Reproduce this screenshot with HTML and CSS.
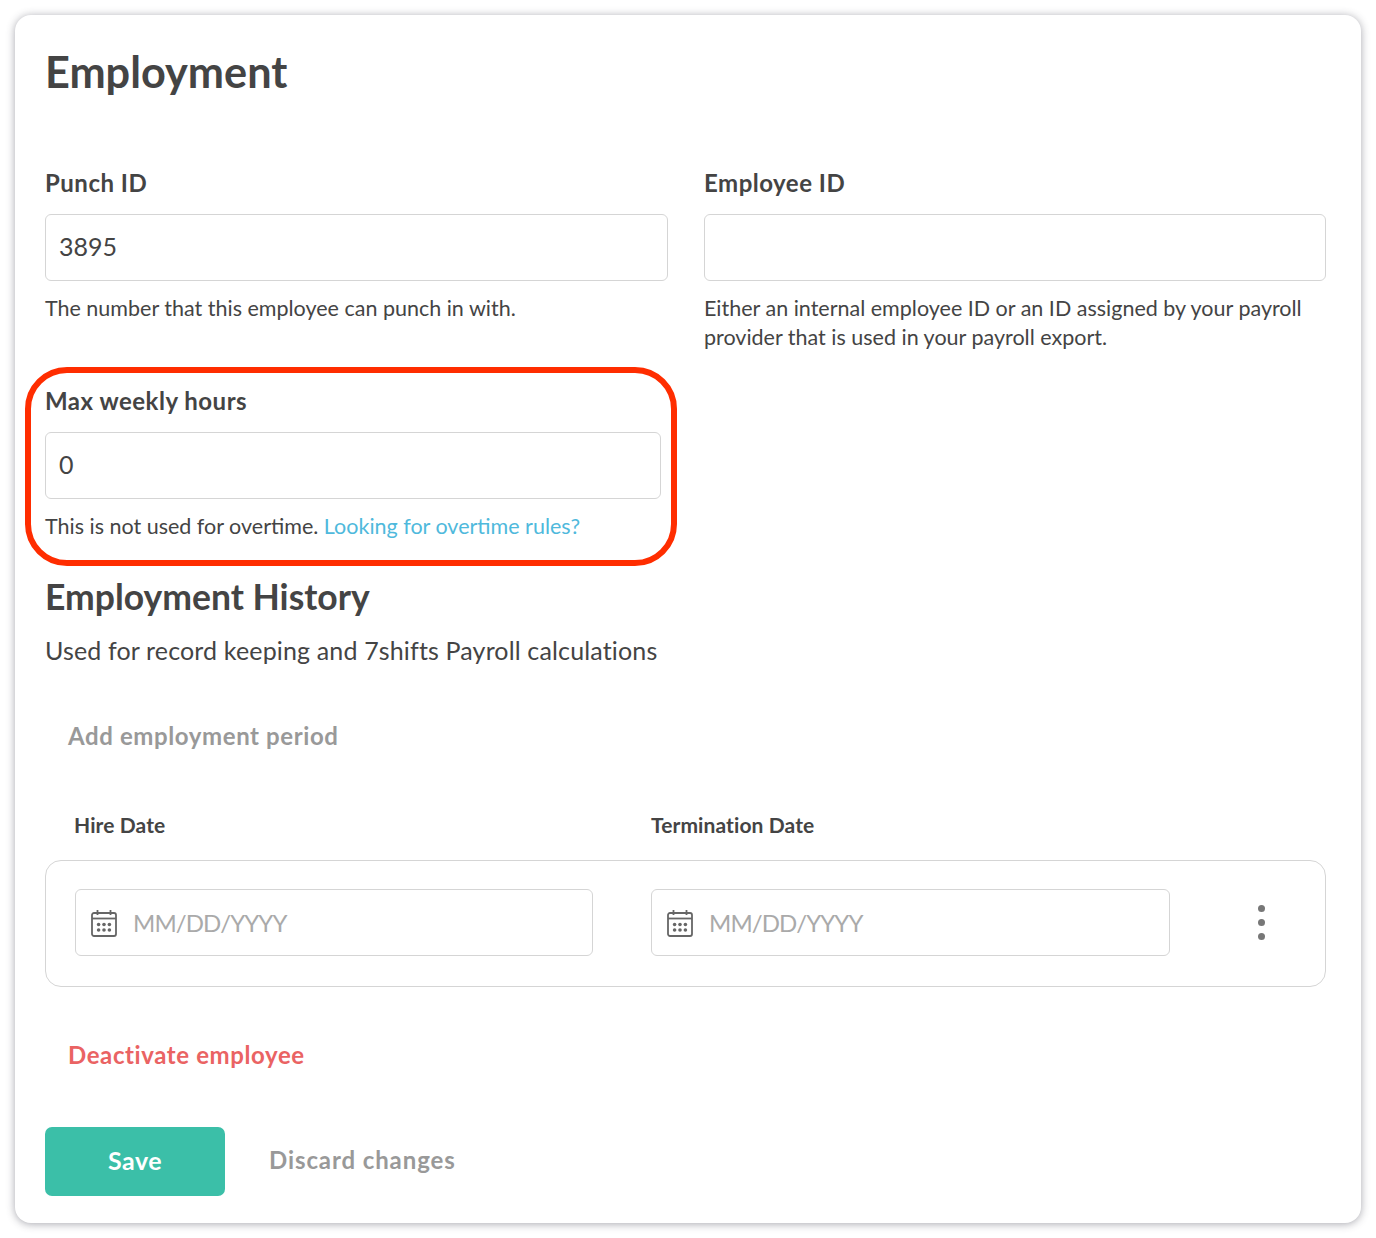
FILE: index.html
```html
<!DOCTYPE html>
<html>
  <head>
    <title>Employment</title>
    <link rel="stylesheet" href="styles.css">
  </head>
  <body>
    <div class="card">
      <h1>Employment</h1>

      <div class="fields">
        <div class="field">
          <label>Punch ID</label>
          <input class="text-input" type="text" value="3895">
          <p class="help">The number that this employee can punch in with.</p>
        </div>
        <div class="field">
          <label>Employee ID</label>
          <input class="text-input" type="text">
          <p class="help">Either an internal employee ID or an ID assigned by your payroll provider that is used in your payroll export.</p>
        </div>
        <div class="field field-narrow">
          <label>Max weekly hours</label>
          <input class="text-input" type="text" value="0">
          <p class="help">This is not used for overtime. <a href="#">Looking for overtime rules?</a></p>
        </div>
      </div>

      <h2>Employment History</h2>
      <p class="subtitle">Used for record keeping and 7shifts Payroll calculations</p>

      <a class="link-muted add-period" href="#">Add employment period</a>

      <div class="period-labels">
        <span>Hire Date</span>
        <span>Termination Date</span>
      </div>

      <div class="period">
        <div class="date-input">
          <svg class="calendar" viewBox="0 0 26 28" width="26" height="28">
            <path d="M6.5 1v5M19.5 1v5" />
            <rect x="1" y="4" width="24" height="23" rx="2" />
            <path d="M1 9.5h24" />
            <g class="calendar-dots">
              <circle cx="7.6" cy="15.5" r="1.8" />
              <circle cx="13" cy="15.5" r="1.8" />
              <circle cx="18.4" cy="15.5" r="1.8" />
              <circle cx="7.6" cy="21" r="1.8" />
              <circle cx="13" cy="21" r="1.8" />
              <circle cx="18.4" cy="21" r="1.8" />
            </g>
          </svg>
          <input type="text" placeholder="MM/DD/YYYY">
        </div>
        <div class="date-input">
          <svg class="calendar" viewBox="0 0 26 28" width="26" height="28">
            <path d="M6.5 1v5M19.5 1v5" />
            <rect x="1" y="4" width="24" height="23" rx="2" />
            <path d="M1 9.5h24" />
            <g class="calendar-dots">
              <circle cx="7.6" cy="15.5" r="1.8" />
              <circle cx="13" cy="15.5" r="1.8" />
              <circle cx="18.4" cy="15.5" r="1.8" />
              <circle cx="7.6" cy="21" r="1.8" />
              <circle cx="13" cy="21" r="1.8" />
              <circle cx="18.4" cy="21" r="1.8" />
            </g>
          </svg>
          <input type="text" placeholder="MM/DD/YYYY">
        </div>
        <div class="more">
          <span></span>
          <span></span>
          <span></span>
        </div>
      </div>

      <a class="deactivate" href="#">Deactivate employee</a>

      <div class="actions">
        <button class="save">Save</button>
        <a class="link-muted discard" href="#">Discard changes</a>
      </div>

      <!-- Red annotation around the max hours field -->
      <div class="highlight"></div>
    </div>
  </body>
</html>
```

FILE: styles.css
```css
* {
  box-sizing: border-box;
}

body {
  margin: 0;
  padding: 15px;
  background-color: #fff;
  color: #444;
  font-family: "Lato", "Liberation Sans", sans-serif;
  font-size: 21.5px;
}

.card {
  position: relative;
  width: 1346px;
  height: 1208px;
  padding: 31px 35px 0 30px;
  background-color: #fff;
  border-radius: 16px;
  box-shadow: 0 1px 8px rgba(60, 60, 75, 0.45);
}

h1 {
  margin: 0;
  font-size: 43.25px;
  line-height: 50px;
  font-weight: 700;
}

.fields {
  display: grid;
  grid-template-columns: 623px 622px;
  column-gap: 36px;
  row-gap: 38px;
  margin-top: 76px;
}

.field label {
  display: block;
  font-size: 24px;
  letter-spacing: 0.5px;
  line-height: 22px;
  font-weight: 700;
}

.field-narrow {
  padding-right: 7px;
}

.text-input {
  display: block;
  width: 100%;
  height: 67px;
  margin-top: 20px;
  padding: 0 13px 4px;
  border: 1px solid #d5d5d5;
  border-radius: 6px;
  color: #444;
  font-family: inherit;
  font-size: 25px;
}

.help {
  margin: 13px 0 0;
  line-height: 29px;
}

.help a {
  color: #4fb9dc;
  text-decoration: none;
}

h2 {
  margin: 36px 0 0;
  font-size: 35.5px;
  line-height: 40px;
  font-weight: 700;
}

.subtitle {
  margin: 18px 0 0;
  font-size: 25px;
  letter-spacing: 0.15px;
  line-height: 30px;
}

.link-muted {
  color: #999;
  font-size: 24px;
  letter-spacing: 0.6px;
  font-weight: 700;
  line-height: 24px;
  text-decoration: none;
}

.add-period {
  display: block;
  margin: 59px 0 0 23px;
}

.period-labels {
  display: flex;
  margin: 65px 0 0 29px;
  font-size: 21px;
  letter-spacing: 0.1px;
  line-height: 24px;
  font-weight: 700;
}

.period-labels span {
  width: 577px;
}

.period {
  display: flex;
  align-items: center;
  height: 127px;
  margin-top: 23px;
  padding: 0 60px 2px 29px;
  border: 1px solid #d5d5d5;
  border-radius: 16px;
}

.date-input {
  display: flex;
  align-items: center;
  gap: 16px;
  width: 518px;
  height: 67px;
  margin-right: 58px;
  padding-left: 15px;
  border: 1px solid #d5d5d5;
  border-radius: 6px;
}

.date-input + .date-input {
  width: 519px;
}

.date-input input {
  flex: 1;
  min-width: 0;
  padding: 0;
  border: 0;
  outline: 0;
  color: #444;
  font-family: inherit;
  font-size: 24px;
  letter-spacing: -0.9px;
}

.date-input input::placeholder {
  color: #aaa;
  opacity: 1;
}

.calendar {
  flex: none;
  fill: none;
  stroke: #666;
  stroke-width: 1.8;
}

.calendar-dots {
  fill: #666;
  stroke: none;
}

.more {
  display: flex;
  flex-direction: column;
  gap: 7px;
  margin-left: auto;
}

.more span {
  width: 7px;
  height: 7px;
  border-radius: 50%;
  background-color: #777;
}

.deactivate {
  display: block;
  margin: 56px 0 0 23px;
  color: #ea6363;
  font-size: 24px;
  letter-spacing: 0.6px;
  font-weight: 700;
  line-height: 24px;
  text-decoration: none;
}

.actions {
  display: flex;
  align-items: center;
  gap: 44px;
  margin-top: 60px;
}

.save {
  width: 180px;
  height: 69px;
  padding: 0 0 3px;
  border: 0;
  border-radius: 7px;
  background-color: #3bbfa8;
  color: #fff;
  font-family: inherit;
  font-size: 25px;
  letter-spacing: 0.5px;
  font-weight: 700;
}

.discard {
  margin-bottom: 3px;
  letter-spacing: 0.9px;
}

.highlight {
  position: absolute;
  left: 10px;
  top: 352px;
  width: 652px;
  height: 199px;
  border: 6px solid #ff2d00;
  border-radius: 42px;
  pointer-events: none;
}
```
